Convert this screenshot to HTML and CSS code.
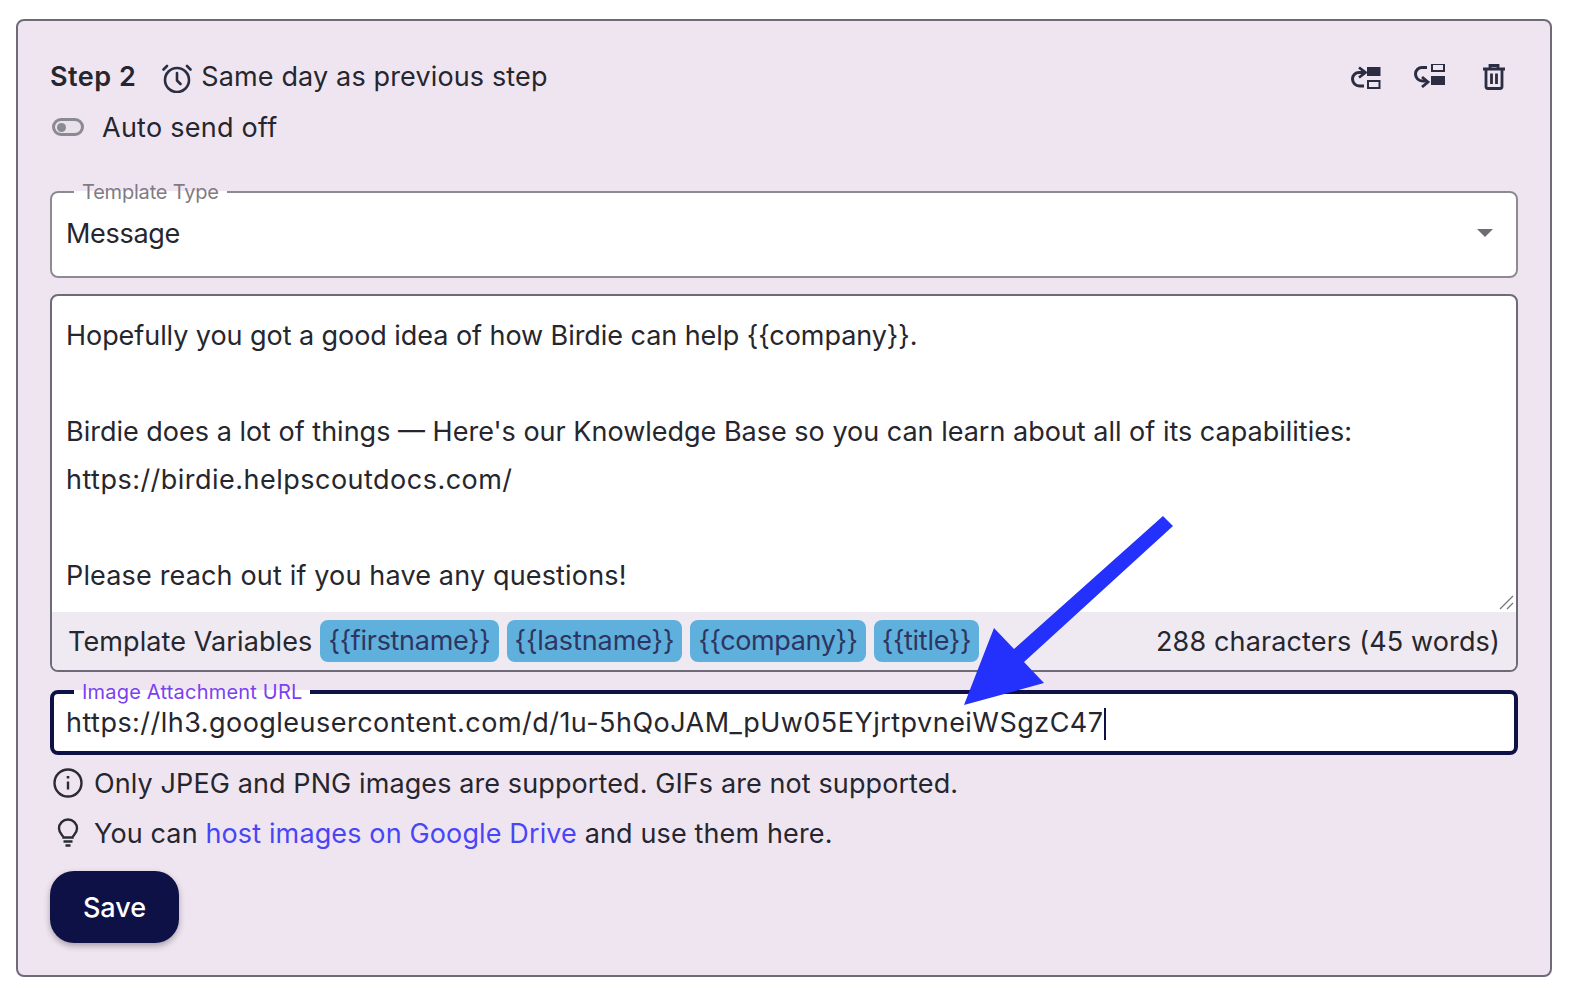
FILE: index.html
```html
<!DOCTYPE html>
<html lang="en">
<head>
<meta charset="utf-8">
<title>Step 2</title>
<link rel="stylesheet" href="styles.css">
</head>
<body>
<main class="card">
  <header class="head">
    <div class="head-left">
      <strong class="step">Step 2</strong>
      <svg class="alarm" viewBox="0 0 30 30" fill="none" stroke="#2b2d42" stroke-width="2.6" stroke-linecap="round" stroke-linejoin="round"><circle cx="15" cy="17" r="12"/><path d="M15 10v7.5l3.5 3.5M5 3L1.5 6.5M25 3l3.500 3.500"/></svg>
      <span class="same">Same day as previous step</span>
    </div>
    <div class="actions">
      <svg class="act act-first" viewBox="0 0 32 24" fill="none"><path d="M15 6.500H10a6.500 6.500 0 0 0 -6.500 6.500v0a7 7 0 0 0 7 7H15" stroke="#2b2d42" stroke-width="3"/><path d="M10 1.500l6.500 5-6.500 5" stroke="#2b2d42" stroke-width="2.800" fill="none"/><rect x="18" y="1" width="13.500" height="9" fill="#2b2d42"/><rect x="19" y="15" width="11.500" height="7" stroke="#2b2d42" stroke-width="2"/></svg>
      <svg class="act act-last" viewBox="0 0 32 24" fill="none"><path d="M14 3.500H9a6.500 6.500 0 0 0 -6.500 6.500a7 7 0 0 0 7 7H13" stroke="#2b2d42" stroke-width="3"/><path d="M9 13l6 5-6 5" stroke="#2b2d42" stroke-width="2.800"/><rect x="19" y="0" width="12" height="7" stroke="#2b2d42" stroke-width="2"/><rect x="18" y="12" width="14" height="9" fill="#2b2d42"/></svg>
      <svg class="trash" viewBox="0 0 22 26" fill="none" stroke="#2b2d42" stroke-width="2.800"><path d="M0 5h22M7 5V1.500h8V5M3 5v17.500a2 2 0 0 0 2 2h12a2 2 0 0 0 2-2V5M8.500 9.500v10.500M13.500 9.500v10.500"/></svg>
    </div>
  </header>

  <div class="auto">
    <span class="toggle"><i class="knob"></i></span>
    <span class="auto-label">Auto send off</span>
  </div>

  <fieldset class="box select">
    <legend>Template Type</legend>
    <div class="select-row">
      <span>Message</span>
      <i class="caret"></i>
    </div>
  </fieldset>

  <section class="editor">
    <div class="body">
      <p class="l1">Hopefully you got a good idea of how Birdie can help {{company}}.</p>
      <p>&nbsp;</p>
      <p>Birdie does a lot of things — Here's our Knowledge Base so you can learn about all of its capabilities:</p>
      <p class="l4">https://birdie.helpscoutdocs.com/</p>
      <p>&nbsp;</p>
      <p class="l6">Please reach out if you have any questions!</p>
      <svg class="grip" viewBox="0 0 15 15" fill="none" stroke="#777" stroke-width="1.300"><path d="M1 14L14 1M8 14l6-6"/></svg>
    </div>
    <footer class="vars">
      <span class="vars-label">Template Variables</span>
      <span class="chip">{{firstname}}</span>
      <span class="chip chip-last">{{lastname}}</span>
      <span class="chip chip-comp">{{company}}</span>
      <span class="chip">{{title}}</span>
      <span class="count">288 characters (45 words)</span>
    </footer>
  </section>

  <fieldset class="box url">
    <legend>Image Attachment URL</legend>
    <div class="url-value">https://lh3.googleusercontent.com/d/1u-5hQoJAM_pUw05EYjrtpvneiWSgzC47<i class="cursor"></i></div>
  </fieldset>

  <div class="hint hint-first">
    <svg class="hint-icon" viewBox="0 0 30 30" fill="none" stroke="#2b2b33" stroke-width="2.400"><circle cx="15" cy="15" r="13.500"/><path d="M15 13.500v8" /><path d="M15 8v2.500" stroke-width="2.600"/></svg>
    <span class="hint-a">Only JPEG and PNG images are supported. GIFs are not supported.</span>
  </div>
  <div class="hint">
    <svg class="hint-icon" viewBox="0 0 30 30" fill="none" stroke="#2b2b33" stroke-width="2.400"><path d="M10.500 19.500c0-2-4.500-3.500-4.500-9a9 9 0 0 1 18 0c0 5.500-4.500 7-4.500 9z"/><path d="M10.500 23.500h9M12.500 27.500h5"/></svg>
    <span class="hint-b">You can <a href="#">host images on Google Drive</a> and use them here.</span>
  </div>

  <button class="save" type="button">Save</button>

  <svg class="arrow" viewBox="0 0 1570 992"><path d="M1163 516L1173 526L1024 662L1044 683L964 705L994 628L1014 649Z" fill="#2430fb"/></svg>
</main>
</body>
</html>
```
FILE: styles.css
```css
* { box-sizing: border-box; }
html, body { margin: 0; padding: 0; background: #fff; }
body {
  font-family: "Inter", "Liberation Sans", sans-serif;
  font-size: 27px;
  color: #26262e;
  width: 1570px;
  height: 992px;
  padding: 19px 18px 15px 16px;
  overflow: hidden;
}
.card {
  height: 958px;
  background: #efe5f1;
  border: 2px solid #6f6a78;
  border-radius: 8px;
  padding: 32px 32px 0;
}
.head { display: flex; justify-content: space-between; align-items: center; height: 46px; margin-bottom: 2px; }
.head-left { display: flex; align-items: center; }
.step { font-weight: 600; letter-spacing: 0.5px; }
.same { letter-spacing: 0.14px; }
.alarm { width: 30px; height: 30px; margin: 3px 9px 0 26px; }
.actions { display: flex; align-items: center; padding-right: 12px; }
.act { width: 32px; height: 24px; margin-right: 32px; }
.act-first { margin-top: 3px; margin-left: -1px; }
.act-last { margin-right: 38px; }
.trash { width: 22px; height: 26px; margin: 2px 1px 0 0; }
.auto { display: flex; align-items: center; height: 46px; margin-top: 5px; }
.auto-label { letter-spacing: 0.25px; }
.toggle {
  width: 32px; height: 18px; margin: 0 18px 0 2px;
  border: 3px solid #8a8a90; border-radius: 9px;
  background: #e8e3ea; display: flex; align-items: center; padding-left: 2px;
}
.knob { width: 9px; height: 9px; border-radius: 50%; background: #8a8a90; }
.box { margin: 0; min-width: 0; background: #fff; border-radius: 8px; }
.box legend { margin-left: 8px; padding: 0 8px; line-height: 20px; font-size: 20px; }
.select { margin-top: 32px; height: 96px; border: 2px solid #8e8a94; padding: 0 14px; position: relative; }
.select legend { color: #7f7b84; letter-spacing: -0.2px; }
.select-row { display: flex; justify-content: space-between; align-items: center; height: 48px; margin-top: 7px; letter-spacing: -0.3px; }
.caret {
  width: 0; height: 0; margin-right: 9px;
  border: 8px solid transparent; border-top-color: #6d6d73; border-bottom-width: 0;
}
.editor { margin-top: 16px; height: 378px; border: 2px solid #6f6a78; border-radius: 8px; background: #fff; overflow: hidden; display: flex; flex-direction: column; }
.body { flex: 1; padding: 16px 14px 0; position: relative; }
.body p { margin: 0; line-height: 48px; }
.body .l1 { letter-spacing: -0.06px; }
.body .l4 { letter-spacing: 0.48px; }
.body .l6 { letter-spacing: 0.16px; }
.grip { position: absolute; right: 2px; bottom: 2px; width: 15px; height: 15px; }
.vars { height: 58px; background: #efe9f1; display: flex; align-items: center; padding: 0 16px; }
.vars-label { margin-right: 8px; letter-spacing: 0.1px; }
.chip { height: 42px; line-height: 41px; padding: 0 8px; background: #5fb0dd; color: #2e3560; border-radius: 8px; margin-right: 8px; letter-spacing: -0.3px; }
.chip-last { letter-spacing: -0.1px; }
.chip-comp { letter-spacing: -0.4px; }
.count { margin-left: auto; letter-spacing: 0.14px; }
.url { height: 73px; border: 4px solid #0e1145; padding: 0 12px; margin-top: 10px; }
.url legend { color: #7c3ff2; letter-spacing: 0.2px; }
.url-value { line-height: 42px; letter-spacing: 0.47px; }
.cursor { display: inline-block; width: 2px; height: 32px; background: #0e1145; vertical-align: -8px; }
.hint { display: flex; align-items: center; height: 50px; }
.hint-first { margin-top: 3px; }
.hint-a { letter-spacing: 0.1px; }
.hint-b { letter-spacing: 0.13px; }
.hint-icon { width: 30px; height: 30px; margin: 0 11px 0 3px; flex: none; }
.hint a { color: #4a45f5; text-decoration: none; }
.save {
  display: block; margin-top: 13px; width: 129px; height: 72px;
  border: 0; border-radius: 24px; background: #0e1145; color: #fff;
  font: 500 27px "Inter", "Liberation Sans", sans-serif;
  box-shadow: 0 3px 6px rgba(0,0,0,.3);
}
.arrow { position: absolute; left: 0; top: 0; width: 1570px; height: 992px; pointer-events: none; }
```
